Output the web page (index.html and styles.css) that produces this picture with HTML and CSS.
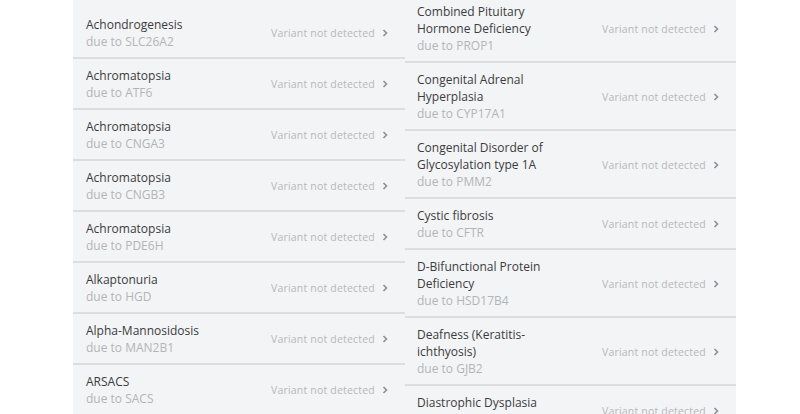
FILE: index.html
```html
<!DOCTYPE html>
<html>
<head>
<meta charset="utf-8">
<link rel="stylesheet" href="styles.css">
</head>
<body>
<div class="page">
  <div class="list">
    <div class="col col-left">
      <div class="row"><div class="info"><div class="title">Achondrogenesis</div><div class="gene">due to SLC26A2</div></div><div class="status">Variant not detected <svg class="chev" width="6" height="8" viewBox="0 0 6 8"><polyline points="1.5,1 4.5,4 1.5,7"/></svg></div></div>
      <div class="row"><div class="info"><div class="title">Achromatopsia</div><div class="gene">due to ATF6</div></div><div class="status">Variant not detected <svg class="chev" width="6" height="8" viewBox="0 0 6 8"><polyline points="1.5,1 4.5,4 1.5,7"/></svg></div></div>
      <div class="row"><div class="info"><div class="title">Achromatopsia</div><div class="gene">due to CNGA3</div></div><div class="status">Variant not detected <svg class="chev" width="6" height="8" viewBox="0 0 6 8"><polyline points="1.5,1 4.5,4 1.5,7"/></svg></div></div>
      <div class="row"><div class="info"><div class="title">Achromatopsia</div><div class="gene">due to CNGB3</div></div><div class="status">Variant not detected <svg class="chev" width="6" height="8" viewBox="0 0 6 8"><polyline points="1.5,1 4.5,4 1.5,7"/></svg></div></div>
      <div class="row"><div class="info"><div class="title">Achromatopsia</div><div class="gene">due to PDE6H</div></div><div class="status">Variant not detected <svg class="chev" width="6" height="8" viewBox="0 0 6 8"><polyline points="1.5,1 4.5,4 1.5,7"/></svg></div></div>
      <div class="row"><div class="info"><div class="title">Alkaptonuria</div><div class="gene">due to HGD</div></div><div class="status">Variant not detected <svg class="chev" width="6" height="8" viewBox="0 0 6 8"><polyline points="1.5,1 4.5,4 1.5,7"/></svg></div></div>
      <div class="row"><div class="info"><div class="title">Alpha-Mannosidosis</div><div class="gene">due to MAN2B1</div></div><div class="status">Variant not detected <svg class="chev" width="6" height="8" viewBox="0 0 6 8"><polyline points="1.5,1 4.5,4 1.5,7"/></svg></div></div>
      <div class="row"><div class="info"><div class="title">ARSACS</div><div class="gene">due to SACS</div></div><div class="status">Variant not detected <svg class="chev" width="6" height="8" viewBox="0 0 6 8"><polyline points="1.5,1 4.5,4 1.5,7"/></svg></div></div>
    </div>
    <div class="col col-right">
      <div class="row"><div class="info"><div class="title">Combined Pituitary Hormone Deficiency</div><div class="gene">due to PROP1</div></div><div class="status">Variant not detected <svg class="chev" width="6" height="8" viewBox="0 0 6 8"><polyline points="1.5,1 4.5,4 1.5,7"/></svg></div></div>
      <div class="row"><div class="info"><div class="title">Congenital Adrenal Hyperplasia</div><div class="gene">due to CYP17A1</div></div><div class="status">Variant not detected <svg class="chev" width="6" height="8" viewBox="0 0 6 8"><polyline points="1.5,1 4.5,4 1.5,7"/></svg></div></div>
      <div class="row"><div class="info"><div class="title">Congenital Disorder of Glycosylation type 1A</div><div class="gene">due to PMM2</div></div><div class="status">Variant not detected <svg class="chev" width="6" height="8" viewBox="0 0 6 8"><polyline points="1.5,1 4.5,4 1.5,7"/></svg></div></div>
      <div class="row"><div class="info"><div class="title">Cystic fibrosis</div><div class="gene">due to CFTR</div></div><div class="status">Variant not detected <svg class="chev" width="6" height="8" viewBox="0 0 6 8"><polyline points="1.5,1 4.5,4 1.5,7"/></svg></div></div>
      <div class="row"><div class="info"><div class="title">D-Bifunctional Protein Deficiency</div><div class="gene">due to HSD17B4</div></div><div class="status">Variant not detected <svg class="chev" width="6" height="8" viewBox="0 0 6 8"><polyline points="1.5,1 4.5,4 1.5,7"/></svg></div></div>
      <div class="row"><div class="info"><div class="title">Deafness (Keratitis-ichthyosis)</div><div class="gene">due to GJB2</div></div><div class="status">Variant not detected <svg class="chev" width="6" height="8" viewBox="0 0 6 8"><polyline points="1.5,1 4.5,4 1.5,7"/></svg></div></div>
      <div class="row"><div class="info"><div class="title">Diastrophic Dysplasia</div><div class="gene">due to SLC26A2</div></div><div class="status">Variant not detected <svg class="chev" width="6" height="8" viewBox="0 0 6 8"><polyline points="1.5,1 4.5,4 1.5,7"/></svg></div></div>
    </div>
  </div>
</div>
</body>
</html>
```

FILE: styles.css
```css
html, body {
  margin: 0;
  padding: 0;
  background: #ffffff;
  height: 414px;
  overflow: hidden;
}
.page {
  padding-left: 73px;
  font-family: "Open Sans", "Noto Sans", sans-serif;
}
.list {
  width: 663px;
  height: 414px;
  overflow: hidden;
  background: #f3f4f6;
  display: grid;
  grid-template-columns: 332px 331px;
  align-items: start;
}
.col-left {
  margin-top: 8px;
}
.col-right {
  margin-top: -5px;
}
.row {
  display: flex;
  align-items: center;
  padding: 8px 17px 7px 13px;
  border-bottom: 2px solid #dcdddf;
}
.col-right .row {
  padding-left: 12px;
}
.info {
  flex: 1;
  min-width: 0;
}
.title {
  font-size: 12px;
  line-height: 17px;
  color: #3b3b3d;
  max-width: 128px;
}
.gene {
  font-size: 12px;
  line-height: 17px;
  color: #b3b4b6;
}
.status {
  flex: none;
  display: flex;
  align-items: center;
  gap: 7px;
  font-size: 10.5px;
  letter-spacing: 0.2px;
  color: #b7b8ba;
}
.chev {
  fill: none;
  stroke: #8e8f92;
  stroke-width: 1.6;
}
```
